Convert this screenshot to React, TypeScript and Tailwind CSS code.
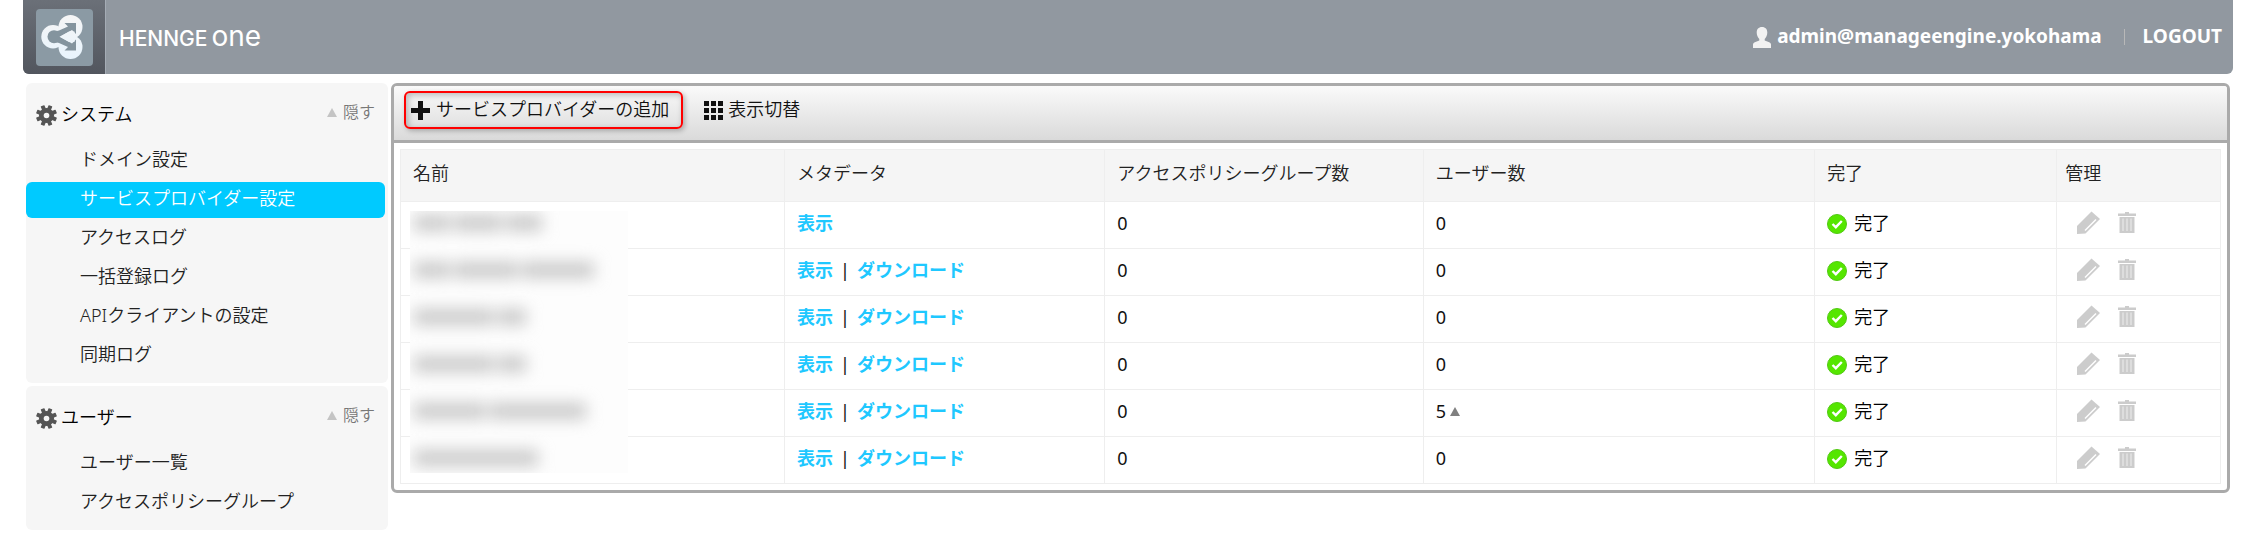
import { ReactNode } from 'react';

interface MenuSection {
  title: string;
  items: string[];
}

interface Provider {
  bars: string[];
  download: boolean;
  users: number;
}

const sections: MenuSection[] = [
  {
    title: 'システム',
    items: ['ドメイン設定', 'サービスプロバイダー設定', 'アクセスログ', '一括登録ログ', 'APIクライアントの設定', '同期ログ'],
  },
  { title: 'ユーザー', items: ['ユーザー一覧', 'アクセスポリシーグループ'] },
];

const activeItem = 'サービスプロバイダー設定';

const columns = [
  { label: '名前', width: 'w-[21.1%]' },
  { label: 'メタデータ', width: 'w-[17.6%]' },
  { label: 'アクセスポリシーグループ数', width: 'w-[17.5%]' },
  { label: 'ユーザー数', width: 'w-[21.5%]' },
  { label: '完了', width: 'w-[13.3%]' },
  { label: '管理', width: 'w-[9%]' },
];

// bars are the word widths of the redacted name
const providers: Provider[] = [
  { bars: ['w-9', 'w-12', 'w-9'], download: false, users: 0 },
  { bars: ['w-9', 'w-16', 'w-[72px]'], download: true, users: 0 },
  { bars: ['w-20', 'w-7'], download: true, users: 0 },
  { bars: ['w-20', 'w-7'], download: true, users: 0 },
  { bars: ['w-[72px]', 'w-24'], download: true, users: 5 },
  { bars: ['w-[124px]'], download: true, users: 0 },
];

const LogoIcon = () => (
  <svg width="57" height="57" viewBox="0 0 57 57" aria-hidden="true">
    <defs>
      <linearGradient id="mark" gradientUnits="userSpaceOnUse" x1="0" y1="5" x2="0" y2="50">
        <stop offset="0" stopColor="#f5f5f5" />
        <stop offset="1" stopColor="#e8f4fd" />
      </linearGradient>
    </defs>
    <rect width="57" height="57" rx="4" fill="#8b9aa4" />
    <g fill="url(#mark)">
      <circle cx="17" cy="27.700" r="11.700" />
      <circle cx="34.500" cy="18" r="12" />
      <circle cx="34.500" cy="38" r="12" />
      <path d="M20 17L40 22v12L20 38z" />
    </g>
    <g fill="#84949e">
      <circle cx="18" cy="27.700" r="6.500" />
      <path d="M19 22.500L23 21.500L32 17.500L28.500 14H40V25L36 21L24 27.700L36 34.500L40 30.500V41.500H28.500L32 38L23 34L19 33z" />
    </g>
    <path d="M23.500 27.700L33 22.500h5.500v10.500H33z" fill="url(#mark)" />
  </svg>
);

const GearIcon = () => (
  <svg width="21" height="21" viewBox="0 0 21 21" fill="#555" aria-hidden="true">
    {[0, 45, 90, 135].map((angle) => (
      <rect key={angle} x="8.5" y="0" width="4" height="21" rx="0.5" transform={`rotate(${angle + 22.5} 10.5 10.5)`} />
    ))}
    <circle cx="10.5" cy="10.5" r="7.5" />
    <circle cx="10.5" cy="10.5" r="2.8" fill="#f6f6f6" />
  </svg>
);

const PlusIcon = () => (
  <svg width="19" height="19" viewBox="0 0 19 19" fill="#111" aria-hidden="true">
    <path d="M7 0h5v7h7v5h-7v7H7v-7H0V7h7z" />
  </svg>
);

const GridIcon = () => (
  <svg width="19" height="19" viewBox="0 0 19 19" fill="#111" aria-hidden="true">
    {[0, 7, 14].map((y) => [0, 7, 14].map((x) => <rect key={`${x}-${y}`} x={x} y={y} width="5" height="5" />))}
  </svg>
);

const UserIcon = () => (
  <svg width="18" height="21" viewBox="0 0 18 21" fill="#f2f2f2" aria-hidden="true">
    <path d="M9 0c3.500 0 5.300 2.200 5.300 5.600c0 2.700-1.200 5-2.600 6.300v1.600l4.500 1.700c1.200.5 1.800 1.200 1.800 2.500V21H0v-3.300c0-1.300.6-2 1.800-2.500l4.500-1.700v-1.600C4.900 10.600 3.700 8.300 3.700 5.600C3.700 2.200 5.500 0 9 0z" />
  </svg>
);

const CheckIcon = () => (
  <svg width="20" height="20" viewBox="0 0 20 20" aria-hidden="true">
    <circle cx="10" cy="10" r="9.500" fill="#55e600" stroke="#52c814" />
    <path d="M5.500 10l3.300 3.200l6-6.200" fill="none" stroke="#fff" strokeWidth="2.400" />
  </svg>
);

const PencilIcon = () => (
  <svg width="23" height="23" viewBox="0 0 23 23" aria-hidden="true">
    <path d="M0 23v-8L14.500 .5L23 8L8.500 22.500z" fill="#ccc" />
    <path d="M8 19.500L19 8.500" stroke="#fff" strokeWidth="1.500" />
  </svg>
);

const TrashIcon = () => (
  <svg width="18" height="21" viewBox="0 0 18 21" aria-hidden="true">
    <path d="M7 0h4v1.500h7V4H0V1.500h7zM1.500 5h15v16h-15z" fill="#ccc" />
    <path d="M5 6.500v12.500M9 6.500v12.500M13 6.500v12.500" stroke="#eee" strokeWidth="1" />
  </svg>
);

const Triangle = ({ color }: { color: string }) => (
  <svg width="10" height="9" viewBox="0 0 10 9" className={color} fill="currentColor" aria-hidden="true">
    <path d="M5 0L10 9H0z" />
  </svg>
);

const ToolButton = ({ icon, label, className }: { icon: ReactNode; label: string; className: string }) => (
  <button type="button" className={`flex h-[38px] items-center text-[18px] text-[#111] ${className}`}>
    {icon}
    <span className="pb-0.5">{label}</span>
  </button>
);

const SideSection = ({ title, items }: MenuSection) => (
  <section className="rounded-md bg-[#f6f6f6] pb-[9px]">
    <div className="flex h-[60px] items-center justify-between pl-[10px] pr-[13px]">
      <h2 className="flex items-center gap-1 pt-1 text-[18px] font-[350] text-black">
        <GearIcon />
        <span className="pb-0.5">{title}</span>
      </h2>
      <button type="button" className="flex items-center gap-[6px] pb-0.5 text-[16px] text-[#777]">
        <Triangle color="text-[#c4c4c4]" />
        隠す
      </button>
    </div>
    <ul className="flex flex-col gap-[3px] pr-[3px]">
      {items.map((item) => (
        <li key={item}>
          <a
            href="#"
            className={`flex h-9 items-center rounded-md pb-1 pl-[54px] text-[18px] ${
              item === activeItem ? 'bg-[#00caff] text-white' : 'text-[#222]'
            }`}
          >
            {item}
          </a>
        </li>
      ))}
    </ul>
  </section>
);

const ProviderTable = () => (
  <div className="relative p-[6px]">
    <table className="w-full table-fixed border-collapse text-left text-[18px] text-[#111]">
      <thead>
        <tr className="h-[52px] bg-[#f5f5f5]">
          {columns.map(({ label, width }) => (
            <th key={label} className={`border border-[#eee] px-3 pb-[6px] font-[350] text-[#222] last:px-2 ${width}`}>
              {label}
            </th>
          ))}
        </tr>
      </thead>
      <tbody>
        {providers.map(({ download, users }, i) => (
          <tr key={i} className="h-[47px]">
            <td className="border border-[#eee]" />
            <td className="border border-[#eee] px-3 pb-1">
              <a href="#" className="font-bold text-[#1fc8ff]">表示</a>
              {download && (
                <>
                  <span className="px-[7px] font-normal">|</span>
                  <a href="#" className="font-bold text-[#1fc8ff]">ダウンロード</a>
                </>
              )}
            </td>
            <td className="border border-[#eee] px-3 pb-1 font-normal">0</td>
            <td className="border border-[#eee] px-3 pb-1 font-normal">
              <span className="flex items-center gap-1">
                {users}
                {users > 0 && <Triangle color="text-[#808080]" />}
              </span>
            </td>
            <td className="border border-[#eee] px-3 pb-0.5 text-black">
              <span className="flex items-center gap-[7px]">
                <CheckIcon />
                <span className="pb-[3px]">完了</span>
              </span>
            </td>
            <td className="border border-[#eee] px-5">
              <span className="flex items-center gap-[18px] pb-[6px]">
                <button type="button" aria-label="編集"><PencilIcon /></button>
                <button type="button" aria-label="削除"><TrashIcon /></button>
              </span>
            </td>
          </tr>
        ))}
      </tbody>
    </table>
    {/* redacted names */}
    <div className="absolute left-4 top-[68px] flex h-[262px] w-[218px] flex-col gap-[23px] overflow-hidden bg-[#fdfdfd] px-1">
      {providers.map(({ bars }, i) => (
        <div key={i} className="flex h-6 shrink-0 items-center gap-1 blur-[8px]">
          {bars.map((bar, j) => (
            <span key={j} className={`h-4 bg-[#c8c8c8] ${bar}`} />
          ))}
        </div>
      ))}
    </div>
  </div>
);

export default function App() {
  return (
    <div className="min-h-screen bg-white font-['Noto_Sans','Noto_Sans_CJK_JP',sans-serif] font-[350] leading-6">
      <header className="ml-[23px] mr-[21px] flex h-[74px] items-center justify-between overflow-hidden rounded-b-md bg-[#9198a0] text-white">
        <div className="flex items-center">
          <div className="flex h-[74px] w-[83px] items-center justify-center border-r border-[#a5acb5] bg-linear-to-b from-[#6b7078] to-[#52565e]">
            <LogoIcon />
          </div>
          <a href="#" className="flex items-baseline gap-1 pl-[13px] font-['Inter',sans-serif]">
            <span className="text-[21px] font-medium">HENNGE</span>
            <span className="text-[28px] font-normal">one</span>
          </a>
        </div>
        <nav className="flex items-center pr-[11px] text-[19px] font-bold">
          <a href="#" className="flex items-center gap-[6px]">
            <UserIcon />
            <span className="pb-0.5">admin@manageengine.yokohama</span>
          </a>
          <span className="ml-[22px] mr-[18px] h-4 w-px bg-[#b8b8b8]" />
          <a href="#" className="pb-0.5">LOGOUT</a>
        </nav>
      </header>
      <div className="flex items-start gap-[3px] pl-[26px] pr-6 pt-[9px]">
        <aside className="flex w-[362px] shrink-0 flex-col gap-[3px]">
          {sections.map((section) => (
            <SideSection key={section.title} {...section} />
          ))}
        </aside>
        <main className="min-w-0 flex-1 overflow-hidden rounded-md border-[3px] border-[#aaa]">
          <div className="flex h-[57px] items-start gap-[15px] border-b-[3px] border-[#aaa] bg-linear-to-b from-[#fafafa] to-[#dadada] pl-[10px] pt-[5px]">
            <ToolButton
              icon={<PlusIcon />}
              label="サービスプロバイダーの追加"
              className="gap-[6px] rounded-md border-2 border-[#f00] pl-[5px] pr-3 shadow-[2px_2px_5px_rgba(0,0,0,0.25),inset_2px_2px_6px_rgba(0,0,0,0.25)]"
            />
            <ToolButton icon={<GridIcon />} label="表示切替" className="gap-[5px] px-[6px]" />
          </div>
          <ProviderTable />
        </main>
      </div>
    </div>
  );
}
